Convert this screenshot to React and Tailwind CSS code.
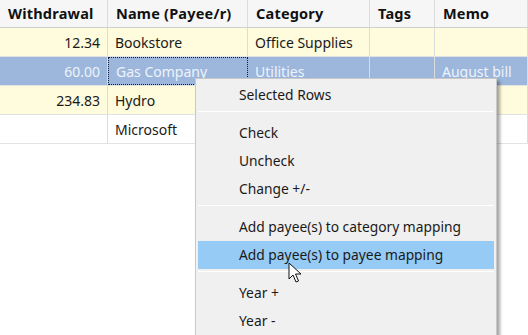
import React from 'react';

const cols = [
  { key: 'w', label: 'Withdrawal', width: 'w-[108px]', align: 'text-right' },
  { key: 'n', label: 'Name (Payee/r)', width: 'w-[140px]', align: 'text-left' },
  { key: 'c', label: 'Category', width: 'w-[122px]', align: 'text-left' },
  { key: 't', label: 'Tags', width: 'w-[65px]', align: 'text-left' },
  { key: 'm', label: 'Memo', width: 'flex-1', align: 'text-left' },
];

const rows = [
  { bg: 'bg-[#fffbdd]', text: 'text-[#1a1a1a]', cells: ['12.34', 'Bookstore', 'Office Supplies', '', ''] },
  { bg: 'bg-[#9cb7db]', text: 'text-[#eef3fb]', cells: ['60.00', 'Gas Company', 'Utilities', '', 'August bill'], selected: true },
  { bg: 'bg-[#fffbdd]', text: 'text-[#1a1a1a]', cells: ['234.83', 'Hydro', '', '', ''] },
  { bg: 'bg-white', text: 'text-[#1a1a1a]', cells: ['', 'Microsoft', '', '', ''] },
];

const MenuItem = ({ label, active }) => (
  <div
    className={`h-[28px] flex items-center pl-[41px] ${active ? 'bg-[#95cbf5]' : ''}`}
  >
    {label}
  </div>
);

const Separator = () => (
  <div className="h-[10px] pt-[2px]">
    <div className="h-px bg-[#d9d9d9] border-b border-white" />
  </div>
);

const Cursor = () => (
  <svg className="absolute left-[288px] top-[262px]" width="14" height="22" viewBox="0 0 14 22">
    <path
      d="M1 1 L1 17 L5 13 L8 20 L10.5 19 L7.5 12 L13 12 Z"
      fill="#ffffff"
      stroke="#111111"
      strokeWidth="1"
      strokeLinejoin="round"
    />
  </svg>
);

export default function App() {
  return (
    <div
      className="relative w-[528px] h-[335px] bg-white overflow-hidden text-[14px]"
      style={{ fontFamily: '"Noto Sans", "Open Sans", sans-serif' }}
    >
      {/* header */}
      <div className="flex h-[28px] bg-[#f6f6f6] border-b border-[#cfcfcf]">
        {cols.map((c) => (
          <div
            key={c.key}
            className={`${c.width} shrink-0 flex items-center px-[8px] font-bold text-[14.5px] tracking-[0.2px] text-[#111] border-r border-[#dcdcdc]`}
          >
            {c.label}
          </div>
        ))}
      </div>

      {/* rows */}
      {rows.map((r, i) => (
        <div key={i} className={`flex h-[29px] ${r.bg} ${r.text} border-b border-[#e3e3e3]`}>
          {r.cells.map((v, j) => {
            const c = cols[j];
            const focused = r.selected && j === 1;
            const isWhiteCell = i === 3 && j === 0;
            return (
              <div
                key={j}
                className={`${c.width} shrink-0 flex items-center px-[7px] ${
                  focused ? 'border border-dotted border-[#0f1a2a]' : 'border-r border-[#dcdcdc]'
                } ${c.align === 'text-right' ? 'justify-end' : 'justify-start'} ${
                  isWhiteCell ? 'bg-white' : ''
                }`}
              >
                {v}
              </div>
            );
          })}
        </div>
      ))}

      {/* context menu */}
      <div
        className="absolute left-[195px] top-[78px] w-[302px] h-[270px] bg-[#f0f0f0] border border-[#c8c8c8] shadow-[3px_3px_3px_rgba(0,0,0,0.35)] px-[2px] pt-[2px] text-[13.8px] text-[#1a1a1a]"
      >
        <MenuItem label="Selected Rows" />
        <Separator />
        <MenuItem label="Check" />
        <MenuItem label="Uncheck" />
        <MenuItem label="Change +/-" />
        <Separator />
        <MenuItem label="Add payee(s) to category mapping" />
        <MenuItem label="Add payee(s) to payee mapping" active />
        <Separator />
        <MenuItem label="Year +" />
        <MenuItem label="Year -" />
      </div>

      <Cursor />
    </div>
  );
}
